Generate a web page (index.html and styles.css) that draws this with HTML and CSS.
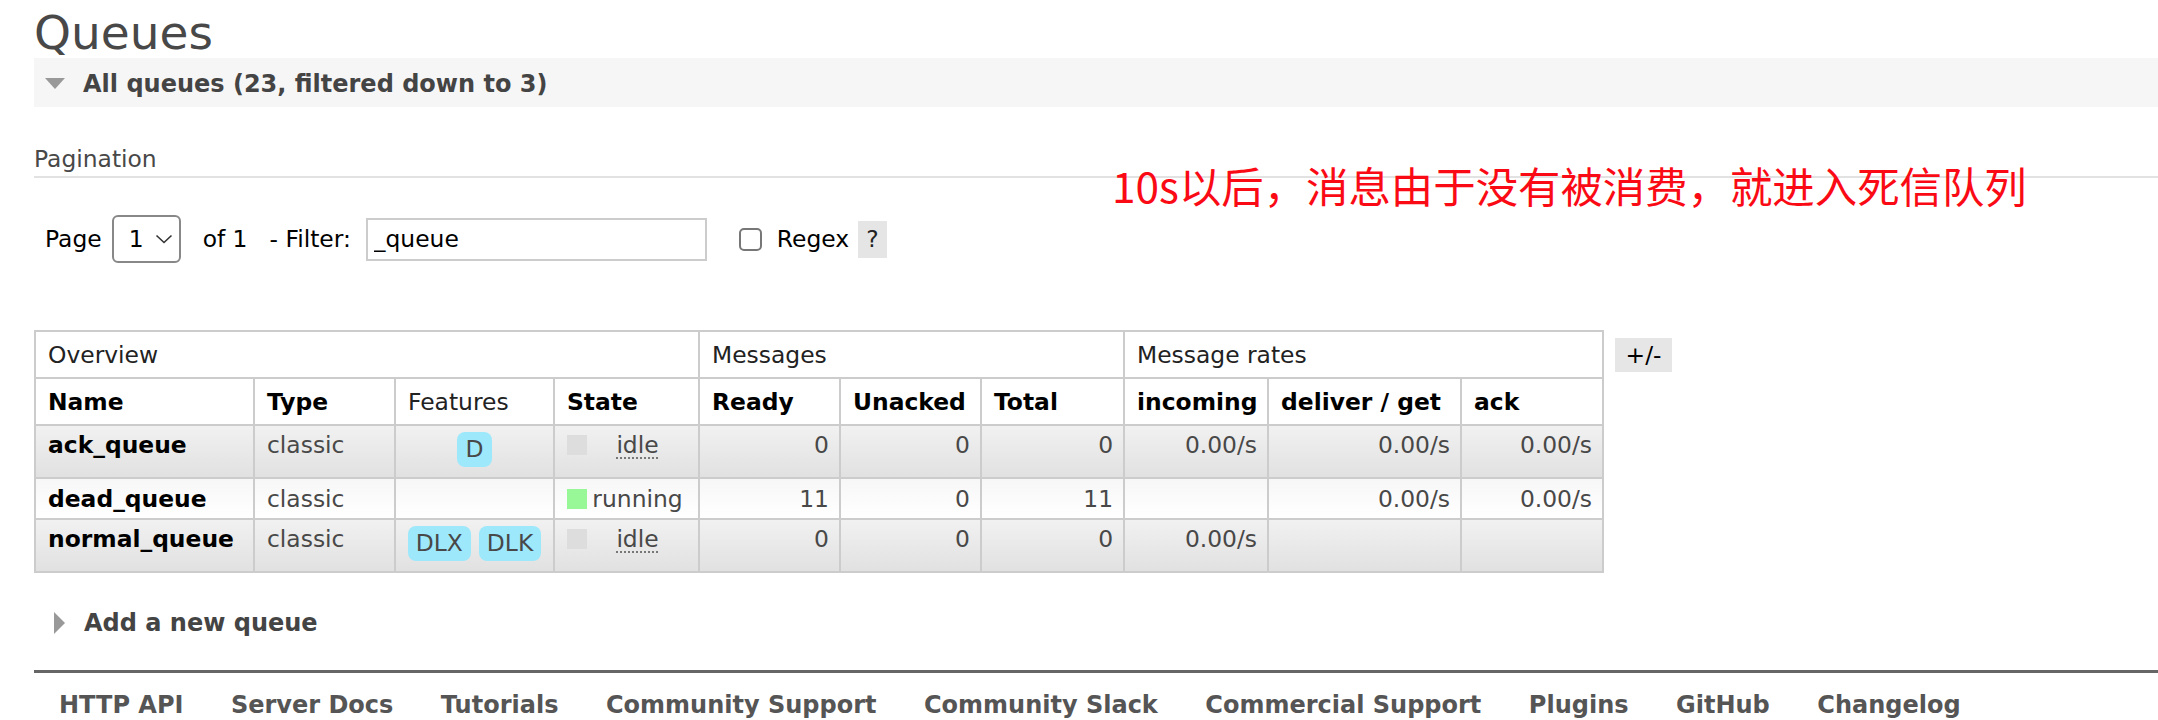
FILE: index.html
```html
<!DOCTYPE html>
<html lang="en">
<head>
    <meta charset="UTF-8">
    <title>Queues</title>
    <link rel="stylesheet" href="styles.css">
</head>
<body>

    <!-- Annotation -->
    <div class="note">10s以后，消息由于没有被消费，就进入死信队列</div>

    <h1>Queues</h1>

    <!-- All queues -->
    <div class="section">
        <h2 class="section-title"><span class="arrow-down"></span>All queues (23, filtered down to 3)</h2>

        <h3 class="pagination">Pagination</h3>

        <div class="filter-row">
            <span>Page</span>
            <span class="page-select">1
                <svg width="18" height="10" viewBox="0 0 18 10"><path d="M1.5 1.5 L9 8.5 L16.5 1.5" fill="none" stroke="#333" stroke-width="1.6"/></svg>
            </span>
            <span class="of">of 1</span>
            <span class="of">- Filter:</span>
            <input class="filter-input" type="text" value="_queue">
            <span class="checkbox"></span>
            <span class="regex">Regex</span>
            <span class="help">?</span>
        </div>

        <div class="table-wrap">
            <table class="list">
                <colgroup>
                    <col class="w-name"><col class="w-type"><col class="w-feat"><col class="w-state">
                    <col class="w-ready"><col class="w-unack"><col class="w-total">
                    <col class="w-in"><col class="w-deliver"><col class="w-ack">
                </colgroup>
                <thead>
                    <tr class="group">
                        <th colspan="4">Overview</th>
                        <th colspan="3">Messages</th>
                        <th colspan="3">Message rates</th>
                    </tr>
                    <tr>
                        <th class="sort">Name</th>
                        <th class="sort">Type</th>
                        <th>Features</th>
                        <th class="sort">State</th>
                        <th class="sort">Ready</th>
                        <th class="sort">Unacked</th>
                        <th class="sort">Total</th>
                        <th class="sort">incoming</th>
                        <th class="sort">deliver / get</th>
                        <th class="sort">ack</th>
                    </tr>
                </thead>
                <tbody>
                    <tr class="alt1">
                        <td class="name">ack_queue</td>
                        <td>classic</td>
                        <td class="features"><span class="badge">D</span></td>
                        <td><div class="state"><span class="dot grey"></span><abbr>idle</abbr></div></td>
                        <td class="num">0</td>
                        <td class="num">0</td>
                        <td class="num">0</td>
                        <td class="num">0.00/s</td>
                        <td class="num">0.00/s</td>
                        <td class="num">0.00/s</td>
                    </tr>
                    <tr class="alt2">
                        <td class="name">dead_queue</td>
                        <td>classic</td>
                        <td class="features"></td>
                        <td><div class="state"><span class="dot green"></span><span class="running">running</span></div></td>
                        <td class="num">11</td>
                        <td class="num">0</td>
                        <td class="num">11</td>
                        <td class="num"></td>
                        <td class="num">0.00/s</td>
                        <td class="num">0.00/s</td>
                    </tr>
                    <tr class="alt1">
                        <td class="name">normal_queue</td>
                        <td>classic</td>
                        <td class="features"><span class="badge">DLX</span><span class="badge">DLK</span></td>
                        <td><div class="state"><span class="dot grey"></span><abbr>idle</abbr></div></td>
                        <td class="num">0</td>
                        <td class="num">0</td>
                        <td class="num">0</td>
                        <td class="num">0.00/s</td>
                        <td class="num"></td>
                        <td class="num"></td>
                    </tr>
                </tbody>
            </table>
            <span class="toggle">+/-</span>
        </div>
    </div>

    <!-- Add a new queue -->
    <div class="section-closed"><span class="arrow-right"></span>Add a new queue</div>

    <!-- Footer -->
    <div class="footer">
        <a href="#">HTTP API</a>
        <a href="#">Server Docs</a>
        <a href="#">Tutorials</a>
        <a href="#">Community Support</a>
        <a href="#">Community Slack</a>
        <a href="#">Commercial Support</a>
        <a href="#">Plugins</a>
        <a href="#">GitHub</a>
        <a href="#">Changelog</a>
    </div>

</body>
</html>
```

FILE: styles.css
```css
* {
    margin: 0;
    padding: 0;
    box-sizing: border-box;
}

body {
    font-family: "DejaVu Sans", Verdana, sans-serif;
    font-size: 23.4px;
    color: #484848;
    background: #ffffff;
    padding: 8px 0 0 34px;
    height: 720px;
    overflow: hidden;
    position: relative;
}

h1 {
    font-size: 47px;
    font-weight: normal;
    line-height: 50px;
    color: #484848;
}

/* Annotation */
.note {
    position: absolute;
    left: 1112px;
    top: 164px;
    font-family: "Noto Sans CJK SC", sans-serif;
    font-size: 42.4px;
    line-height: 1;
    color: #fa0a14;
    white-space: nowrap;
}

/* Section header */
.section-title {
    display: flex;
    align-items: center;
    height: 49px;
    padding: 2px 0 0 11px;
    background: #f6f6f6;
    font-size: 24px;
    font-weight: bold;
    color: #444;
}

.arrow-down {
    width: 0;
    height: 0;
    border-left: 10.5px solid transparent;
    border-right: 10.5px solid transparent;
    border-top: 11px solid #999;
    margin-right: 18px;
}

.pagination {
    margin-top: 38px;
    font-size: 23.4px;
    font-weight: normal;
    line-height: 28px;
    padding-bottom: 3px;
    border-bottom: 2px solid #e2e2e2;
    color: #484848;
}

/* Filter row */
.filter-row {
    margin-top: 37px;
    display: flex;
    align-items: center;
    padding-left: 11px;
    color: #000;
}

.page-select {
    display: flex;
    align-items: center;
    justify-content: space-between;
    width: 69px;
    height: 48px;
    margin-left: 10px;
    padding: 0 6px 0 15px;
    border: 2px solid #888;
    border-radius: 6px;
}

.of {
    margin-left: 22px;
}

.filter-input {
    margin-left: 15px;
    width: 341px;
    height: 43px;
    border: 2px solid #ccc;
    padding: 0 6px;
    font-family: "DejaVu Sans", Verdana, sans-serif;
    font-size: 23.4px;
    color: #000;
    outline: none;
}

.checkbox {
    margin-left: 32px;
    width: 23px;
    height: 23px;
    border: 2px solid #777;
    border-radius: 5px;
    background: #fff;
}

.regex {
    margin-left: 15px;
}

.help {
    margin-left: 9px;
    width: 29px;
    height: 37px;
    line-height: 37px;
    text-align: center;
    background: #e5e5e5;
    color: #222;
}

/* Queue table */
.table-wrap {
    margin-top: 67px;
    display: flex;
    align-items: flex-start;
    gap: 11px;
}

table.list {
    border-collapse: collapse;
    table-layout: fixed;
    width: 1568px;
}

.w-name { width: 219px; }
.w-type { width: 141px; }
.w-feat { width: 159px; }
.w-state { width: 145px; }
.w-ready { width: 141px; }
.w-unack { width: 141px; }
.w-total { width: 143px; }
.w-in { width: 144px; }
.w-deliver { width: 193px; }
.w-ack { width: 142px; }

table.list th,
table.list td {
    border: 2px solid #ccc;
    line-height: 28px;
    text-align: left;
    vertical-align: top;
    white-space: nowrap;
}

table.list th {
    padding: 9px 8px 8px 12px;
    font-weight: normal;
    color: #222;
    background: #fff;
}

table.list th.sort {
    font-weight: bold;
    color: #000;
}

table.list td {
    padding: 5px 10px 5px 12px;
}

table.list tr.alt1 td {
    background: linear-gradient(#f1f1f1, #e1e1e1);
}

table.list tr.alt2 td {
    background: linear-gradient(#f7f7f7, #ffffff);
}

table.list tr.alt2 td {
    padding-top: 6px;
}

table.list td.name {
    font-weight: bold;
    color: #000;
}

table.list td.num {
    text-align: right;
}

table.list td.features {
    text-align: center;
    padding: 5px 4px;
}

.badge {
    display: inline-block;
    vertical-align: top;
    height: 35px;
    line-height: 35px;
    padding: 0 8px;
    margin: 1px 4px 5px;
    border-radius: 8px;
    background: #9ee8fc;
    color: #484848;
}

.state {
    display: flex;
    align-items: flex-start;
}

.dot {
    flex: none;
    width: 20px;
    height: 20px;
    margin-top: 4px;
}

.dot.grey {
    background: #dddddd;
}

.dot.green {
    background: #98f898;
}

.state abbr,
.state .running {
    flex: 1;
    text-align: center;
}

.state abbr {
    text-decoration: underline dotted #777;
    text-decoration-thickness: 2px;
    text-underline-offset: 4px;
}

.toggle {
    margin-top: 8px;
    width: 57px;
    height: 34px;
    line-height: 34px;
    text-align: center;
    background: #e6e6e6;
    color: #000;
}

/* Closed section */
.section-closed {
    margin-top: 24px;
    height: 49px;
    display: flex;
    align-items: center;
    padding: 2px 0 0 20px;
    font-size: 24px;
    font-weight: bold;
    color: #444;
}

.arrow-right {
    width: 0;
    height: 0;
    border-top: 11px solid transparent;
    border-bottom: 11px solid transparent;
    border-left: 11px solid #999;
    margin-right: 19px;
}

/* Footer */
.footer {
    margin-top: 24px;
    border-top: 3px solid #666;
    padding: 18px 0 0 25px;
    display: flex;
    gap: 47.5px;
}

.footer a {
    font-size: 24px;
    font-weight: bold;
    line-height: 28px;
    color: #555;
    text-decoration: none;
    white-space: nowrap;
}
```
